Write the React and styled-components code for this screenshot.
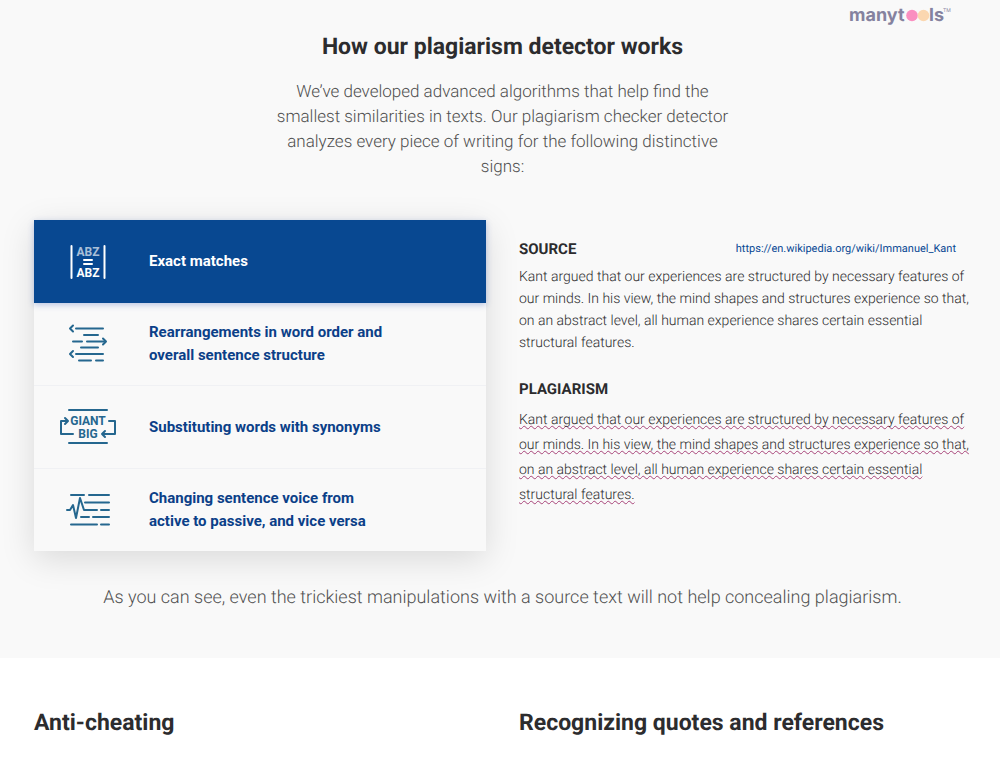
import React, { useState } from "react";
import styled, { createGlobalStyle } from "styled-components";

const GlobalStyle = createGlobalStyle`
  *, *::before, *::after { box-sizing: border-box; }
  body {
    margin: 0;
    background: #ffffff;
    color: #2c2c2e;
    font-family: Roboto, "Liberation Sans", sans-serif;
    text-rendering: geometricPrecision;
  }
  h2, h3, p, ul { margin: 0; padding: 0; }
`;

const Page = styled.div`
  position: relative;
`;

const Brand = styled.a`
  position: absolute;
  top: 4px;
  right: 48px;
  display: block;
  line-height: 0;
`;

const Section = styled.section`
  padding: ${(p) => (p.$tinted ? "31px 29px 46px 34px" : "49px 29px 18px 34px")};
  background: ${(p) => (p.$tinted ? "#f9f9f9" : "#ffffff")};
`;

const Title = styled.h2`
  font-size: 23px;
  line-height: 32px;
  font-weight: 700;
  color: #2c2c2e;
  text-align: ${(p) => (p.$centered ? "center" : "left")};
`;

const Intro = styled.p`
  max-width: 460px;
  margin: 17px auto 0;
  font-size: 17px;
  line-height: 25px;
  font-weight: 300;
  color: #505050;
  text-align: center;
`;

const Columns = styled.div`
  display: grid;
  grid-template-columns: 1fr 1fr;
  column-gap: 33px;
  align-items: start;
`;

const Comparison = styled(Columns)`
  margin-top: 40px;
`;

const TabList = styled.ul`
  list-style: none;
  background: #f9f9f9;
  box-shadow: 0 8px 32px rgba(0, 0, 0, 0.13);
`;

const TabItem = styled.li`
  & + & { border-top: 1px solid #f0f1f4; }
  &:nth-child(2) { border-top: 0; }
`;

const Tab = styled.button`
  position: relative;
  display: grid;
  grid-template-columns: 60px minmax(0, 240px);
  column-gap: 31px;
  align-items: center;
  width: 100%;
  min-height: ${(p) => (p.$active ? "83px" : "82px")};
  padding: 0 24px;
  border: 0;
  background: ${(p) => (p.$active ? "#084891" : "transparent")};
  box-shadow: ${(p) => (p.$active ? "0 2px 6px rgba(40, 80, 180, 0.3)" : "none")};
  color: ${(p) => (p.$active ? "#ffffff" : "#0b4088")};
  font-family: inherit;
  font-size: 15px;
  line-height: 23px;
  font-weight: 700;
  text-align: left;
  cursor: pointer;
`;

const TabIcon = styled.svg`
  display: block;
  width: 60px;
  height: 40px;
  overflow: visible;
  fill: none;
  stroke: currentColor;
  stroke-width: 2;
  stroke-linecap: round;
  stroke-linejoin: round;
  color: ${(p) => (p.$active ? "#ffffff" : "#25678f")};

  text {
    fill: currentColor;
    stroke: none;
    font-family: Roboto, sans-serif;
    font-size: 12px;
    font-weight: 700;
    text-anchor: middle;
  }

  text.narrow {
    font-family: "Liberation Sans Narrow", Roboto, sans-serif;
  }
`;

const Example = styled.div`
  padding-top: 18px;
`;

const ExampleHead = styled.div`
  display: flex;
  align-items: center;
  justify-content: space-between;
  padding-right: 15px;
  margin-top: ${(p) => (p.$spaced ? "24px" : "0")};
`;

const ExampleTitle = styled.h3`
  font-size: 15px;
  line-height: 22px;
  font-weight: 700;
  color: #2c2c2e;
`;

const SourceLink = styled.a`
  font-size: 11px;
  line-height: 22px;
  color: #0b4a95;
  text-decoration: none;
`;

const Passage = styled.p`
  margin-top: ${(p) => (p.$flagged ? "8px" : "6px")};
  font-size: 14px;
  line-height: ${(p) => (p.$flagged ? "25px" : "22px")};
  font-weight: 300;
  color: #2c2c2e;
`;

const Flagged = styled.span`
  text-decoration: underline wavy #a84479 1px;
  text-decoration-skip-ink: none;
`;

const Summary = styled.p`
  margin-top: 33px;
  font-size: 18px;
  line-height: 28px;
  font-weight: 300;
  color: #505050;
  text-align: center;
`;

function ExactIcon(props) {
  return (
    <TabIcon viewBox="0 0 60 40" aria-hidden="true" {...props}>
      <path d="M13.5 4v32M46.5 4v32M26 18h8M26 22h8" />
      <text className="narrow" x="30" y="14" opacity="0.65">ABZ</text>
      <text className="narrow" x="30" y="35">ABZ</text>
    </TabIcon>
  );
}

function ReorderIcon(props) {
  return (
    <TabIcon viewBox="0 0 60 40" aria-hidden="true" {...props}>
      <path d="M18 4.5h27M26 11h14M15 17.5h9M29 17.5h17M23 23.5h17M18 30h27M21 36.5h12M38 36.5h7" />
      <path d="M15 1.5l-3 3 3 3M45 14.500l3 3-3 3M15 27l-3 3 3 3" />
    </TabIcon>
  );
}

function SynonymIcon(props) {
  return (
    <TabIcon viewBox="0 0 60 40" aria-hidden="true" {...props}>
      <path d="M11 3h38M11 36h38" />
      <path d="M15 27H3V14h6M7 11l3 3-3 3M51 14h6v13H44M47 24l-3 3 3 3" />
      <text x="30" y="18">GIANT</text>
      <text x="30" y="31">BIG</text>
    </TabIcon>
  );
}

function VoiceIcon(props) {
  return (
    <TabIcon viewBox="0 0 60 40" aria-hidden="true" {...props}>
      <path d="M13 5h13M31 5h20M27 12.500h24M43 20h8M23 27h8M35 27h16M13 34.500h26M43 34.500h8" />
      <path d="M9 20h3l3-5 3 13 4-20 4 12h13" />
    </TabIcon>
  );
}

const tabs = [
  { label: "Exact matches", Icon: ExactIcon },
  { label: "Rearrangements in word order and overall sentence structure", Icon: ReorderIcon },
  { label: "Substituting words with synonyms", Icon: SynonymIcon },
  { label: "Changing sentence voice from active to passive, and vice versa", Icon: VoiceIcon },
];

const passage =
  "Kant argued that our experiences are structured by necessary features of our minds. In his view, the mind shapes and structures experience so that, on an abstract level, all human experience shares certain essential structural features.";

function Logo() {
  return (
    <svg width="104" height="24" viewBox="0 0 104 24" role="img" aria-label="manytools" fill="#85829f">
      <g fontFamily="Inter, sans-serif" fontWeight="700" fontSize="18">
        <text x="1" y="17">manyt</text>
        <text x="81" y="17">ls</text>
      </g>
      <circle cx="64" cy="11.5" r="5.8" fill="#fa8fc0" />
      <circle cx="75.5" cy="11.5" r="5.8" fill="#fbd7b0" />
      <text x="95" y="8" fontFamily="Inter, sans-serif" fontSize="5">TM</text>
    </svg>
  );
}

export default function App() {
  const [selected, setSelected] = useState(0);
  return (
    <Page>
      <GlobalStyle />
      <Brand href="#"><Logo /></Brand>
      <Section $tinted>
        <Title $centered>How our plagiarism detector works</Title>
        <Intro>
          We’ve developed advanced algorithms that help find the smallest similarities in texts.
          Our plagiarism checker detector analyzes every piece of writing for the following
          distinctive signs:
        </Intro>
        <Comparison>
          <TabList>
            {tabs.map(({ label, Icon }, i) => (
              <TabItem key={label}>
                <Tab type="button" $active={i === selected} aria-pressed={i === selected} onClick={() => setSelected(i)}>
                  <Icon $active={i === selected} />
                  <span>{label}</span>
                </Tab>
              </TabItem>
            ))}
          </TabList>
          <Example>
            <ExampleHead>
              <ExampleTitle>SOURCE</ExampleTitle>
              <SourceLink href="#">https://en.wikipedia.org/wiki/Immanuel_Kant</SourceLink>
            </ExampleHead>
            <Passage>{passage}</Passage>
            <ExampleHead $spaced>
              <ExampleTitle>PLAGIARISM</ExampleTitle>
            </ExampleHead>
            <Passage $flagged><Flagged>{passage}</Flagged></Passage>
          </Example>
        </Comparison>
        <Summary>
          As you can see, even the trickiest manipulations with a source text will not help
          concealing plagiarism.
        </Summary>
      </Section>
      <Section>
        <Columns>
          <Title>Anti-cheating</Title>
          <Title>Recognizing quotes and references</Title>
        </Columns>
      </Section>
    </Page>
  );
}
